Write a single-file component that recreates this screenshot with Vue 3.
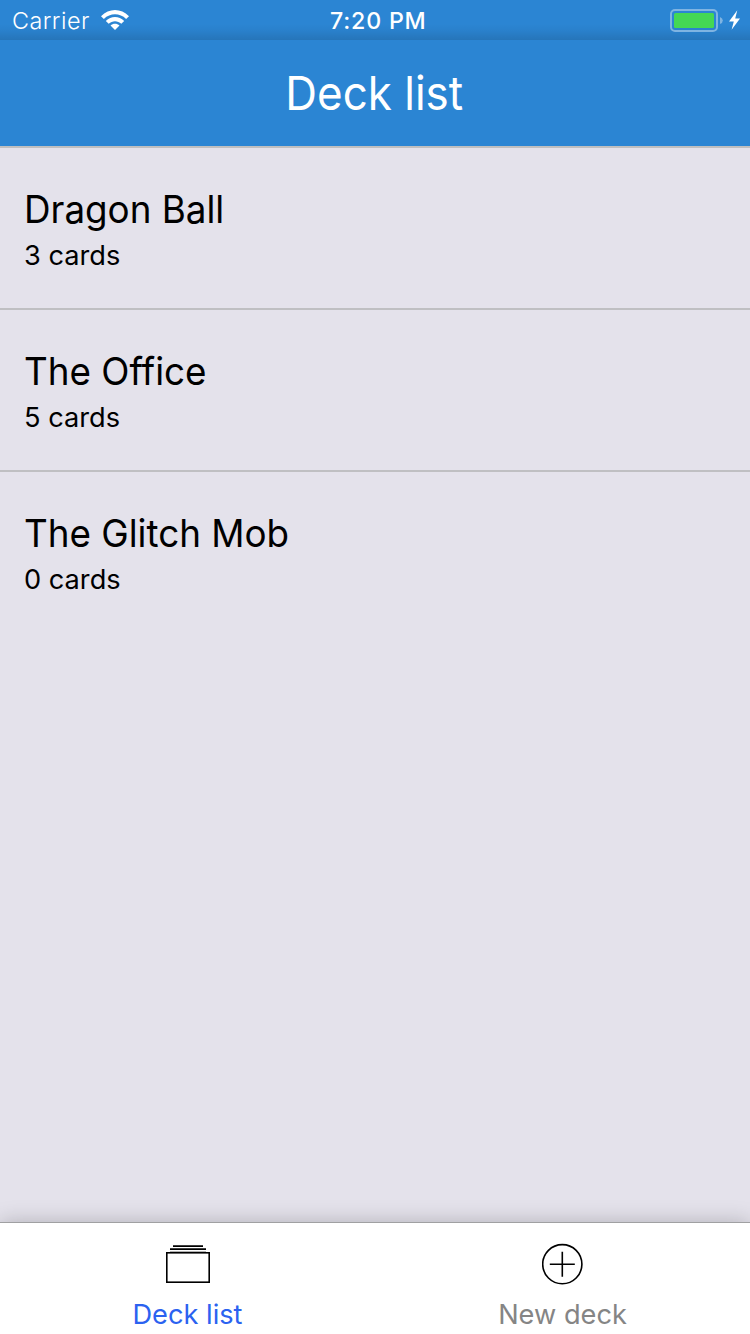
<script setup>
const decks = [
  { id: 'dragon', name: 'Dragon Ball', count: '3 cards' },
  { id: 'office', name: 'The Office', count: '5 cards' },
  { id: 'glitch', name: 'The Glitch Mob', count: '0 cards' },
]
</script>

<template>
  <div class="screen">
    <div class="status">
      <div class="side">
        <span class="carrier">Carrier</span>
        <svg class="wifi" width="28" height="20" viewBox="0 0 28 20">
          <path d="M0 6.2 C8 -2 20 -2 28 6.2 L25.1 9 C18.8 2.8 9.2 2.8 2.9 9 Z" fill="#fff" />
          <path d="M4.8 10.9 C10 5.8 18 5.8 23.2 10.9 L20.3 13.7 C16.8 10.3 11.2 10.3 7.7 13.7 Z" fill="#fff" />
          <path d="M9.5 15.5 C12 13.2 16 13.2 18.5 15.5 L14 20 Z" fill="#fff" />
        </svg>
      </div>
      <span class="time">7:20 PM</span>
      <div class="side right">
        <svg width="72" height="24" viewBox="0 0 72 24">
          <rect x="1" y="2" width="46" height="21" rx="4" fill="none" stroke="#7fb4e2" stroke-width="2" />
          <rect x="4" y="5" width="40" height="15" rx="1.5" fill="#44d754" />
          <path d="M50 9 Q52.8 10 52.8 12.5 Q52.8 15 50 16 Z" fill="#7fb4e2" />
          <path d="M67.3 2.2 L59 13.6 H63.8 L61.6 21.8 L70 10.6 H65.2 Z" fill="#fff" />
        </svg>
      </div>
    </div>
    <header class="header"><h1>Deck list</h1></header>
    <main class="decks">
      <section v-for="d in decks" :key="d.id" class="deck">
        <h2>{{ d.name }}</h2>
        <p>{{ d.count }}</p>
      </section>
    </main>
    <nav class="tabs">
      <div class="tab active">
        <svg width="44" height="42" viewBox="0 0 44 42">
          <path d="M7 3.2H37M4 6.2H40" stroke="#000" stroke-width="1.7" />
          <path d="M4 8.5H40" stroke="#000" stroke-opacity=".3" stroke-width="1" />
          <rect x=".8" y="9.8" width="42.4" height="29.4" fill="none" stroke="#000" stroke-width="1.6" />
        </svg>
        <span>Deck list</span>
      </div>
      <div class="tab">
        <svg width="42" height="42" viewBox="0 0 42 42">
          <circle cx="20.3" cy="21.2" r="19.6" fill="none" stroke="#000" stroke-width="1.6" />
          <path d="M7.8 21.2H32.8M20.3 8.7V33.7" stroke="#000" stroke-width="1.6" />
        </svg>
        <span>New deck</span>
      </div>
    </nav>
  </div>
</template>

<style>
body { margin: 0; }
</style>

<style scoped>
.screen {
  width: 750px;
  height: 1334px;
  display: flex;
  flex-direction: column;
  overflow: hidden;
  background: #e4e2eb;
  font-family: Inter, Roboto, sans-serif;
}
h1, h2, p { margin: 0; font-weight: 400; white-space: nowrap; }
.status {
  height: 40px;
  display: flex;
  align-items: center;
  color: #fff;
  background: linear-gradient(to bottom, rgba(0, 0, 0, 0) 24px, rgba(0, 0, 0, .04) 31px, rgba(0, 0, 0, .12) 40px), #2b85d3;
}
.side { width: 330px; display: flex; align-items: center; }
.carrier { margin-left: 12px; width: 78px; padding-top: 2px; font-size: 23.4px; line-height: 40px; font-weight: 350; letter-spacing: .45px; white-space: nowrap; }
.wifi { margin-left: 11px; }
.time { width: 97px; padding-top: 2px; font-size: 23.2px; line-height: 40px; font-weight: 550; letter-spacing: .8px; white-space: nowrap; }
.right { width: 323px; justify-content: flex-end; }
.right svg { margin-right: 8px; margin-top: -1px; }
.header {
  height: 106px;
  display: flex;
  justify-content: center;
  background: #2b85d3;
  border-bottom: 2px solid #bfbfc0;
}
h1 { margin-right: 1px; font-size: 46.6px; line-height: 107px; font-weight: 370; transform: scaleX(.943); color: #fff; }
.decks { flex: 1; }
.deck {
  box-sizing: border-box;
  height: 162px;
  padding: 36px 24px 0;
  border-bottom: 2px solid #bfbfc2;
}
.deck:last-child { border-bottom: 0; }
.deck h2 { font-size: 38.8px; line-height: 50px; transform: scaleX(.948); transform-origin: left; }
.deck p { font-size: 27.2px; line-height: 44px; }
.tabs {
  height: 111px;
  display: flex;
  border-top: 1px solid #a0a0a2;
  background: #fff;
  box-shadow: 0 0 20px rgba(0, 0, 0, .22);
}
.tab { flex: 1; display: flex; flex-direction: column; align-items: center; color: #858585; }
.tab svg { margin-top: 20px; }
.tab span { font-size: 27.2px; line-height: 36px; margin-top: 12px; white-space: nowrap; }
.active { color: #2b62f0; }
</style>
